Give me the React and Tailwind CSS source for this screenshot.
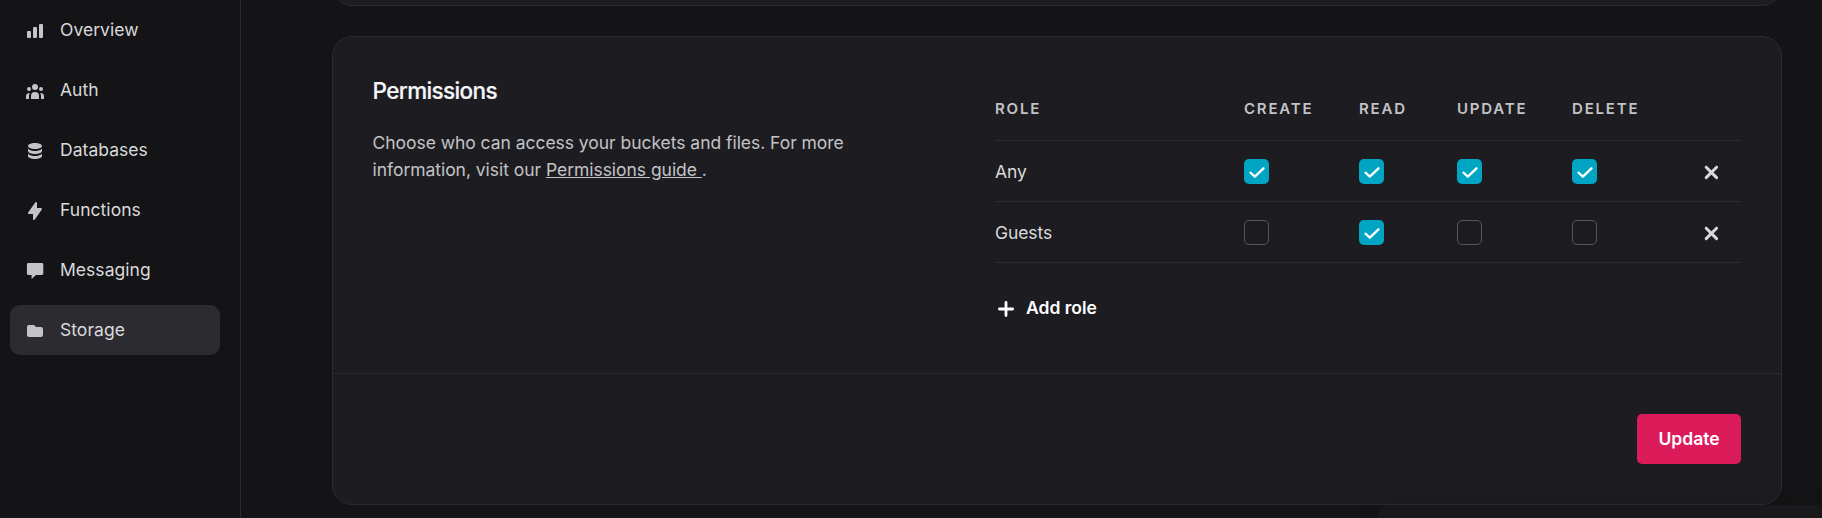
import {
  HiChartBar,
  HiUserGroup,
  HiDatabase,
  HiLightningBolt,
  HiFolder,
} from "react-icons/hi";

function ChatIcon({ className }) {
  return (
    <svg viewBox="0 0 20 20" className={className} fill="currentColor">
      <path d="M3.3 2h13.6A1.4 1.4 0 0 1 18.300 3.400v9.200a1.400 1.400 0 0 1-1.400 1.400H11l-4.400 4V14H3.300a1.400 1.400 0 0 1-1.400-1.400V3.400A1.400 1.400 0 0 1 3.300 2Z" />
    </svg>
  );
}

const navItems = [
  { label: "Overview", Icon: HiChartBar },
  { label: "Auth", Icon: HiUserGroup },
  { label: "Databases", Icon: HiDatabase },
  { label: "Functions", Icon: HiLightningBolt },
  { label: "Messaging", Icon: ChatIcon },
  { label: "Storage", Icon: HiFolder, active: true },
];

const columns = ["Role", "Create", "Read", "Update", "Delete"];

const roles = [
  { name: "Any", grants: [true, true, true, true] },
  { name: "Guests", grants: [false, true, false, false] },
];

const tableGrid = "grid grid-cols-[249px_115px_98px_115px_1fr_60px] border-b border-[#2b2b2f]";

function Checkbox({ checked }) {
  if (!checked) {
    return <span className="block size-[25px] rounded-[5px] border border-[#56565c]" />;
  }
  return (
    <span className="block size-[25px] rounded-[5px] bg-[#00a5c3]">
      <svg viewBox="0 0 25 25" className="size-[25px]" fill="none" stroke="white" strokeWidth="2.3" strokeLinecap="round" strokeLinejoin="round">
        <path d="M6.500 13.700 10.800 17.700 19.500 9.300" />
      </svg>
    </span>
  );
}

function Sidebar() {
  return (
    <nav className="flex w-[241px] shrink-0 flex-col gap-[10px] border-r border-[#2b2b2e] pt-[5px] pr-5 pl-[10px]">
      {navItems.map(({ label, Icon, active }) => (
        <a
          key={label}
          className={`flex h-[50px] w-[210px] shrink-0 items-center gap-[15px] rounded-[10px] pl-[15px] ${active ? "bg-[#2c2c30]" : ""}`}
        >
          <Icon className="mt-[2px] size-5 text-[#c4c4c7]" />
          <span className="text-[17.5px] leading-[26px] tracking-[0.040px] text-[#d9d9dc]">{label}</span>
        </a>
      ))}
    </nav>
  );
}

function PermissionsTable() {
  return (
    <div className="w-[746px] pt-[10px]">
      <div className={`${tableGrid} h-[60px] pt-[17px]`}>
        {columns.map((name) => (
          <span key={name} className="text-[15px] leading-[22px] font-semibold tracking-[1.8px] text-[#c3c3c6] uppercase">
            {name}
          </span>
        ))}
      </div>
      {roles.map((role) => (
        <div key={role.name} className={`${tableGrid} h-[61px] items-center`}>
          <span className="pt-[2px] text-[17.5px] leading-[26px] tracking-[-0.080px] text-[#d9d9dc]">{role.name}</span>
          {role.grants.map((checked, i) => (
            <Checkbox key={i} checked={checked} />
          ))}
          <svg viewBox="0 0 20 20" className="mt-px ml-5 size-5" fill="none" stroke="#d9d9dc" strokeWidth="3" strokeLinecap="round">
            <path d="M5.200 5.200 15.600 15.600M15.600 5.200 5.200 15.600" />
          </svg>
        </div>
      ))}
      <button className="mt-[32px] flex items-center gap-[9px] text-[17.5px] leading-[26px] font-semibold text-white">
        <svg viewBox="0 0 22 22" className="mt-[2px] size-[22px]" fill="none" stroke="white" strokeWidth="2.8" strokeLinecap="round">
          <path d="M11 4.400v13.200M4.400 11h13.200" />
        </svg>
        Add role
      </button>
    </div>
  );
}

export default function App() {
  return (
    <div className="relative flex h-[518px] w-[1822px] overflow-hidden bg-[#141416] font-['Inter','Liberation_Sans',sans-serif]">
      <Sidebar />
      <main className="flex flex-1 flex-col gap-[30px] pl-[91px]">
        <div className="-mt-[44px] h-[50px] w-[1450px] shrink-0 rounded-[20px] border border-[#2b2b2f] bg-[#1d1d21]" />
        <section className="flex h-[469px] w-[1450px] shrink-0 flex-col rounded-[20px] border border-[#2b2b2f] bg-[#1d1d21]">
          <div className="flex h-[337px] justify-between border-b border-[#2b2b2f] pt-[34px] pr-10 pl-[39.5px]">
            <div className="w-[520px]">
              <h2 className="pt-[5px] text-[22.5px] leading-[30px] font-medium tracking-[-0.620px] text-[#f6f6f8] [-webkit-text-stroke:0.2px_#f6f6f8]">Permissions</h2>
              <p className="mt-[23px] text-[17.5px] leading-[27px] tracking-[-0.040px] text-[#c3c3c6]">
                Choose who can access your buckets and files. For more
                <br />
                information, visit our <a className="underline">Permissions guide&nbsp;</a>.
              </p>
            </div>
            <PermissionsTable />
          </div>
          <div className="flex flex-1 items-start justify-end pt-10 pr-10">
            <button className="h-[50px] w-[104px] rounded-[5px] bg-[#dc1b5a] text-[17.5px] font-semibold text-white">Update</button>
          </div>
        </section>
      </main>
      <div className="absolute top-[505px] right-0 h-[60px] w-[444px] rounded-tl-[10px] bg-[#19191b] shadow-[0_0_24px_rgba(0,0,0,0.12)]" />
    </div>
  );
}
